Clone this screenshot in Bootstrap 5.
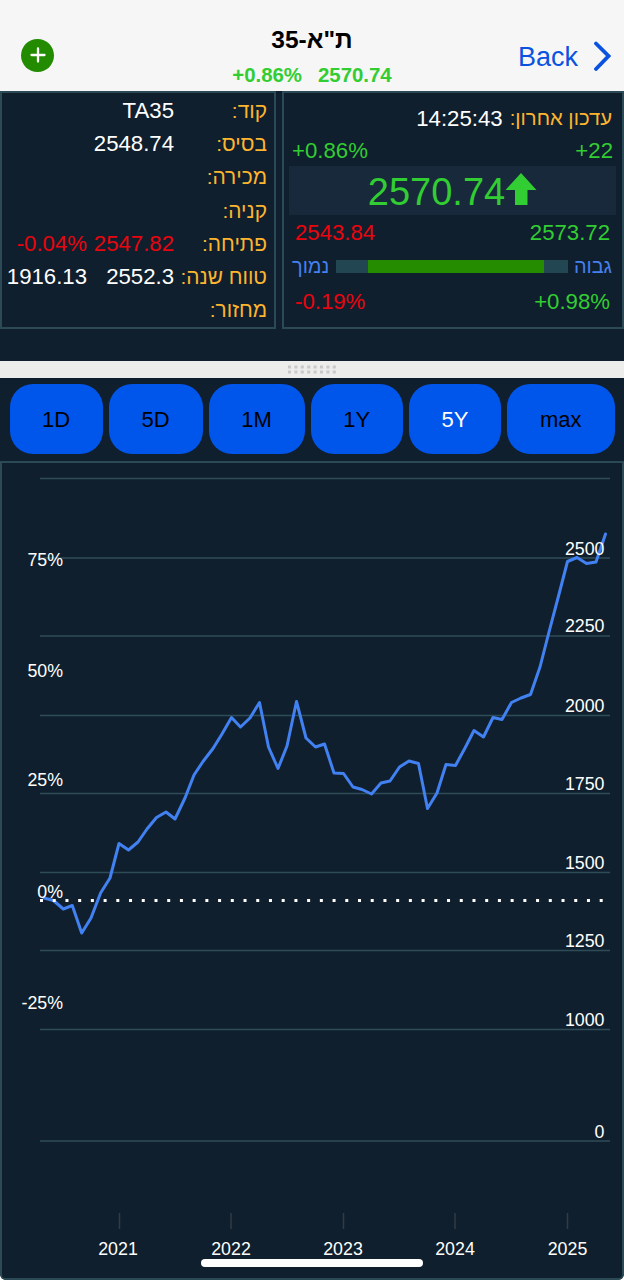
<!DOCTYPE html>
<html lang="he">
<head>
<meta charset="utf-8">
<meta name="viewport" content="width=device-width, initial-scale=1">
<title>ת"א-35</title>
<link href="https://cdn.jsdelivr.net/npm/bootstrap@5.3.0/dist/css/bootstrap.min.css" rel="stylesheet">
<style>
  :root { --ink:#101f2d; --edge:#2c4a55; --up:#32cd32; --down:#e8050f; --gold:#fdb52f; --sky:#4580ee; --act:#0055eb; }
  body { background:#fff; font-family:"Liberation Sans",Arial,sans-serif; font-size:22.2px; line-height:33.35px; color:#fff; }
  .screen { width:624px; height:1280px; background:var(--ink); border-radius:0 0 6px 6px; overflow:hidden; }
  .topbar { height:91px; background:#f6f6f6; }
  .add-btn { width:33px; height:33px; background:#228b00; margin:18.5px 0 0 21px; }
  .heading { color:#000; font-size:24.5px; line-height:28px; margin-top:26px; }
  .subheading { color:var(--up); font-size:20.4px; line-height:24px; margin-top:9px; }
  .back { color:#0a53e0; font-size:27px; line-height:32px; padding:37px 13px 0 0; }
  .side { width:170px; }
  .quotes { height:238px; gap:6px; }
  .pane { border:2px solid var(--edge); }
  .pane-info { width:276px; padding:1px 7px 0 0; }
  .pane-live { padding:9px 6px 0 5px; }
  .info-row { display:grid; grid-template-columns:93px 87px 1fr; height:33.2px; white-space:nowrap; }
  .info-row span { text-align:right; }
  .info-row span + span { direction:ltr; }
  .gold { color:var(--gold); } .up { color:var(--up); } .down { color:var(--down); } .sky { color:var(--sky); }
  .heb { font-size:20.9px; }
  .stamp { padding-right:4px; gap:7px; }
  .stamp .gold { font-size:20.3px; }
  .change { height:31px; line-height:32px; padding:0 3px 0 3px; }
  .limits { height:34.5px; line-height:36px; padding:0 6px 0 6px; }
  .big { height:49px; background:#17293b; font-size:38px; line-height:51px; }
  .track-row { font-size:19.9px; padding:0 4px 0 3px; height:34px; }
  .range { height:13px; background:#224753; margin:0 6px 0 7px; }
  .range-fill { height:13px; background:#258c00; }
  .splitter { height:17px; background:#ededec; margin-top:32px; }
  .periods { height:83px; padding:6px 9.5px 0; gap:6px; }
  .periods .btn { --bs-btn-bg:var(--act); --bs-btn-color:#000; --bs-btn-active-bg:var(--act); --bs-btn-active-color:#fff; height:70px; border:0; border-radius:23px; font-size:22px; padding:0; }
  .chart { height:819px; border:2px solid var(--edge); border-radius:0 0 5px 5px; }
  .chart text { fill:#fff; font-size:17.8px; }
  .home { width:222px; height:8px; left:201px; top:1259px; }
</style>
</head>
<body>
<main class="screen position-relative d-flex flex-column">
  <header class="topbar d-flex justify-content-between flex-shrink-0 align-items-start">
    <div class="side pt-3 mt-1">
      <button class="add-btn btn rounded-circle border-0 p-0 d-flex align-items-center justify-content-center" aria-label="הוספה">
        <svg width="16" height="16" viewBox="0 0 16 16"><path d="M8 1.500v13M1.500 8h13" stroke="#fff" stroke-width="2.300" stroke-linecap="round"/></svg>
      </button>
    </div>
    <div class="text-center fw-bold">
      <h1 class="heading fw-bold mb-0" dir="rtl">ת"א-35</h1>
      <div class="subheading d-flex justify-content-center"><span class="me-3">+0.86%</span><span>2570.74</span></div>
    </div>
    <div class="side d-flex justify-content-end">
      <a class="back text-decoration-none d-flex align-items-center" href="#"><span class="pt-1">Back</span>
        <svg class="ms-3" width="17" height="32" viewBox="0 0 17 32"><path d="M2 4.500 14.500 17 2 30" fill="none" stroke="#0a53e0" stroke-width="3.800" stroke-linecap="round"/></svg>
      </a>
    </div>
  </header>

  <section class="quotes d-flex flex-shrink-0">
    <div class="pane pane-info flex-shrink-0" dir="rtl">
      <div class="info-row"><span class="gold heb">קוד:</span><span>TA35</span></div>
      <div class="info-row"><span class="gold heb">בסיס:</span><span>2548.74</span></div>
      <div class="info-row"><span class="gold heb">מכירה:</span></div>
      <div class="info-row"><span class="gold heb">קניה:</span></div>
      <div class="info-row"><span class="gold heb">פתיחה:</span><span class="down">2547.82</span><span class="down">-0.04%</span></div>
      <div class="info-row"><span class="gold heb">טווח שנה:</span><span>2552.3</span><span>1916.13</span></div>
      <div class="info-row"><span class="gold heb">מחזור:</span></div>
    </div>
    <div class="pane pane-live flex-grow-1">
      <div class="stamp d-flex justify-content-end"><span>14:25:43</span><span class="gold" dir="rtl">עדכון אחרון:</span></div>
      <div class="change d-flex justify-content-between up"><span>+0.86%</span><span>+22</span></div>
      <div class="big d-flex align-items-center justify-content-center up"><span class="pt-1">2570.74</span><svg width="32" height="32" viewBox="0 0 32 32" class="mb-1"><path d="M16 0 31.500 17H22.500V32H10V17H.5Z" fill="#32cd32"/></svg></div>
      <div class="limits d-flex justify-content-between"><span class="down">2543.84</span><span class="up">2573.72</span></div>
      <div class="track-row d-flex align-items-center sky"><span>נמוך</span>
        <div class="range flex-grow-1"><div class="range-fill" style="width:76.2%;margin-left:13.7%"></div></div>
        <span>גבוה</span></div>
      <div class="limits d-flex justify-content-between"><span class="down">-0.19%</span><span class="up">+0.98%</span></div>
    </div>
  </section>

  <div class="splitter flex-shrink-0 d-flex justify-content-center align-items-center">
    <svg width="50" height="10" viewBox="0 0 50 10"><path d="M1 2H49M1 7H49" fill="none" stroke="#c9c9c9" stroke-width="3" stroke-dasharray="3 3.400"/></svg>
  </div>

  <nav class="periods d-flex flex-shrink-0">
    <button class="btn" style="width:93px">1D</button>
    <button class="btn" style="width:94px">5D</button>
    <button class="btn" style="width:96px">1M</button>
    <button class="btn" style="width:92.500px">1Y</button>
    <button class="btn active" style="width:92px">5Y</button>
    <button class="btn" style="width:107.500px">max</button>
  </nav>

  <section class="chart flex-shrink-0">
    <svg class="d-block" width="620" height="815" viewBox="2 463 620 815">
      <path d="M40 478.500H610M40 558H610M40 636H610M40 715.500H610M40 793.500H610M40 872.500H610M40 950.500H610M40 1029.500H610M40 1141H610" stroke="#2e4c57" stroke-width="1.500"/>
      <path d="M119.500 1213V1229M231 1213V1229M343.500 1213V1229M455 1213V1229M567.500 1213V1229" stroke="#313b43" stroke-width="1.500"/>
      <polyline fill="none" stroke="#4281f1" stroke-width="3" stroke-linejoin="round" stroke-linecap="round" points="44,898 53.500,900.500 63.300,909 72.300,905.500 81.700,933 91,918 100.600,893 110,878 119,843.500 128.500,850 138,842 147,829 156.500,817.500 166,812 175,819 185,798 194,775 203,761.500 213,748.500 222,734 231.500,717.500 240.500,727 250,718 259.500,702.500 268.500,747 278,768.500 287,746 296.500,701.500 306,738 315.500,747 324.500,744 334,773 343.500,773.500 353,787 362,789.500 371.500,794 381,783 390,781 399.500,767 409,761 418.500,763.500 427.500,808.500 437,793 446,764.500 455.500,765.500 465,748 474,730.500 483.500,737 493,717.500 502,719.500 511.500,702.500 521,698 530.500,694.500 540,667 549,632 558,598 567.500,561.500 577,557.500 586.500,563.500 596,562 605.500,534"/>
      <path d="M40 900.500H605" stroke="#fff" stroke-width="3" stroke-dasharray="3 9.720"/>
      <g text-anchor="end">
        <text x="63" y="566">75%</text><text x="63" y="677">50%</text><text x="63" y="786">25%</text><text x="63" y="897.500">0%</text><text x="63" y="1008.500">-25%</text>
        <text x="604.500" y="554.500">2500</text><text x="604.500" y="632">2250</text><text x="604.500" y="712">2000</text><text x="604.500" y="789.500">1750</text><text x="604.500" y="869">1500</text><text x="604.500" y="946.500">1250</text><text x="604.500" y="1026">1000</text><text x="604.500" y="1137.500">0</text>
      </g>
      <g text-anchor="middle">
        <text x="118" y="1254.500">2021</text><text x="231" y="1254.500">2022</text><text x="343" y="1254.500">2023</text><text x="455" y="1254.500">2024</text><text x="567.500" y="1254.500">2025</text>
      </g>
    </svg>
  </section>
  <div class="home position-absolute bg-white rounded-pill"></div>
</main>
<script src="https://cdn.jsdelivr.net/npm/bootstrap@5.3.0/dist/js/bootstrap.bundle.min.js"></script>
</body>
</html>
